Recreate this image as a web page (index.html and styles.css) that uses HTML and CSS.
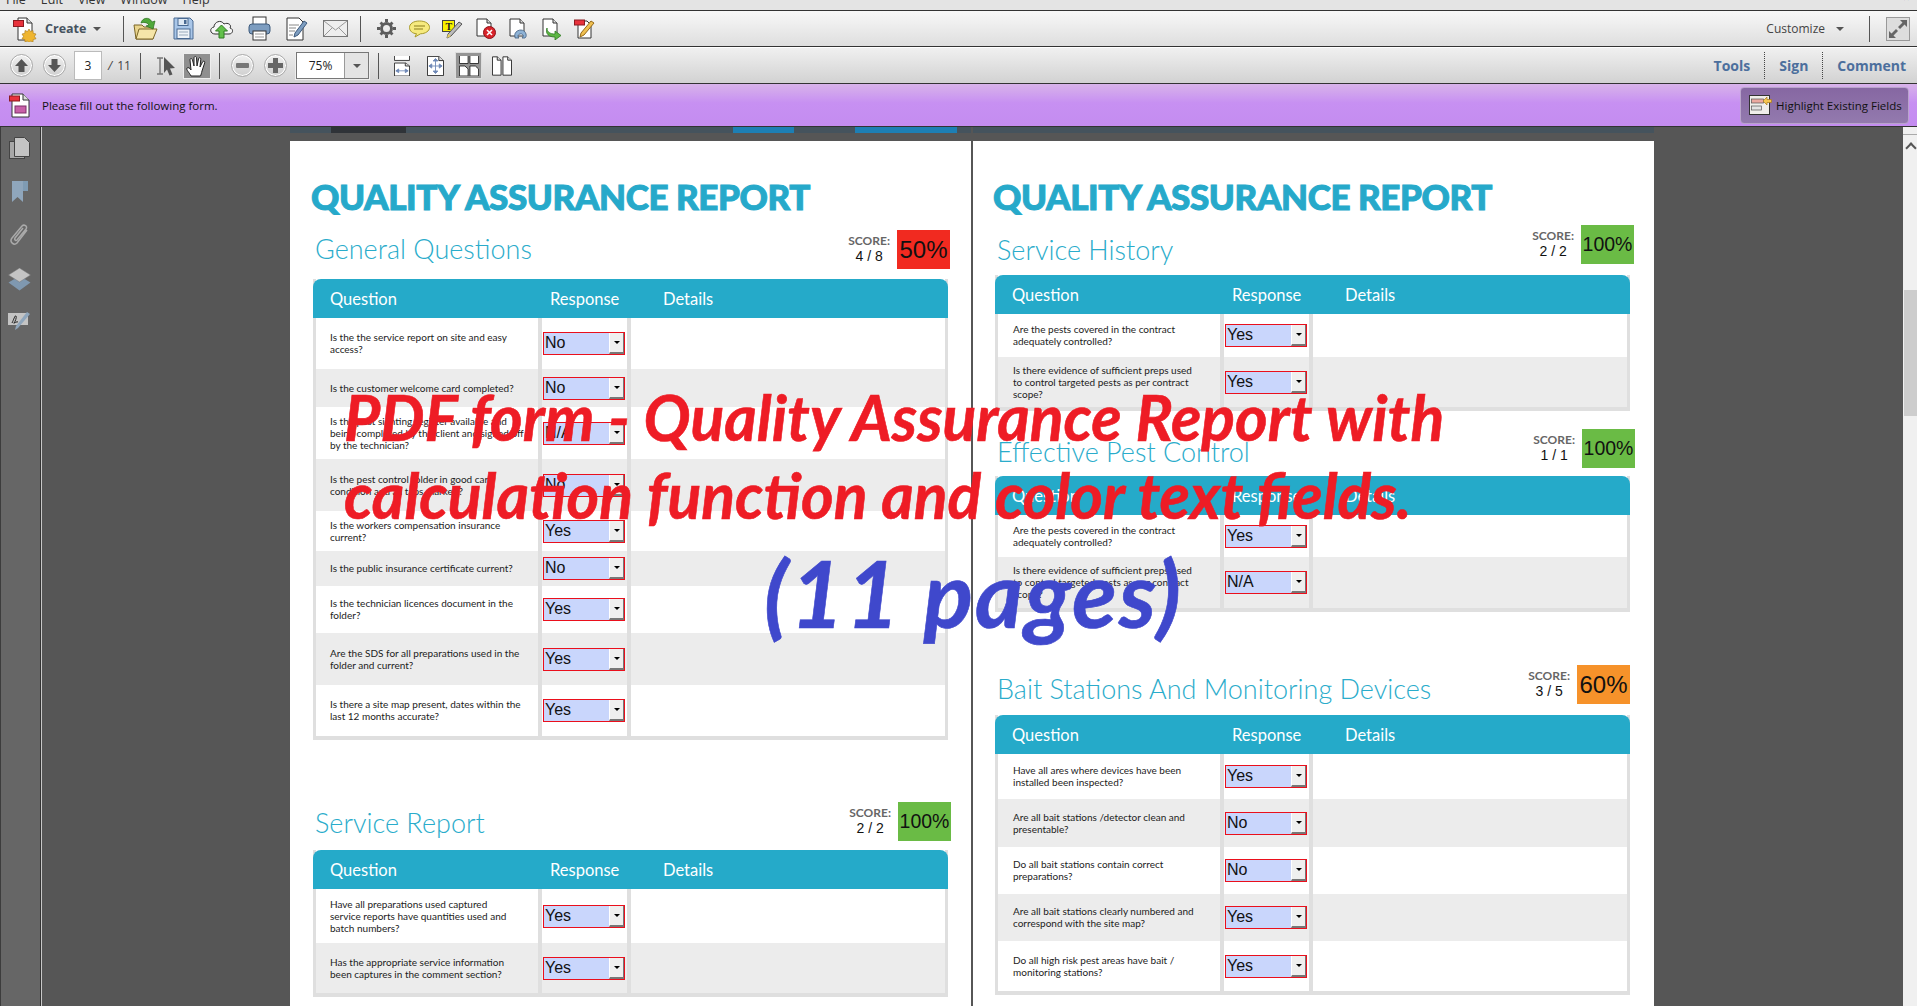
FILE: index.html
```html
<!DOCTYPE html>
<html>
<head>
<meta name="viewport" content="width=device-width, initial-scale=1">
<title>Quality Assurance Report</title>
<link rel="stylesheet" href="styles.css">
</head>
<body>
<div class="app">

  <div class="menubar">
    <span>File</span><span>Edit</span><span>View</span><span>Window</span><span>Help</span><span class="menu-close">×</span>
  </div>

  <!-- first toolbar -->
  <div class="toolbar tb1">
    <svg class="ico-create" width="24" height="26" viewBox="0 0 24 26"><path d="M5 2h9l5 5v17H5z" fill="#fff" stroke="#333"/><path d="M14 2v5h5" fill="#ddd" stroke="#333"/><rect x="0.5" y="4.500" width="10" height="6" fill="#e8323c" stroke="#8c1a20"/><path d="M16 13l1.500 2.500 2.500-1 .2 2.800 2.800.7-1.500 2.400 1.500 2.400-2.800.7-.2 2.500-2.500-1-1.500 2-1.500-2-2.500 1-.2-2.500-2.800-.7 1.500-2.400-1.500-2.400 2.800-.7.2-2.800 2.500 1z" fill="#efb52f" stroke="#a8781a" stroke-width=".6"/></svg>
    <span class="create-label">Create</span><span class="caret"></span>
    <span class="sep sep-a"></span>
    <span class="slot38"><svg width="25" height="25" viewBox="0 0 25 25"><path d="M1 9h8l2 2h9v12H3z" fill="#e9d48c" stroke="#7a6526"/><path d="M3 23l3-10h18l-4 10z" fill="#f5e5a8" stroke="#7a6526"/><path d="M8 7c1-5 8-7 11-1l3-1-2 8-7-3 3-1c-2-3-6-3-8-2z" fill="#4fa83a" stroke="#2a6e1e" stroke-width=".7"/></svg></span>
    <span class="slot38"><svg width="21" height="23" viewBox="0 0 21 23"><path d="M1 1h16l3 3v18H1z" fill="#a9c6e8" stroke="#4a6a92"/><rect x="5" y="1.500" width="10" height="7" fill="#dfe9f4" stroke="#4a6a92"/><rect x="11" y="3" width="2.500" height="4" fill="#4a6a92"/><rect x="4" y="12" width="13" height="9.500" fill="#eef3f8" stroke="#4a6a92"/><path d="M6 15h9M6 18h9" stroke="#9ab" stroke-width="1"/></svg></span>
    <span class="slot38"><svg width="25" height="21" viewBox="0 0 25 21"><path d="M6 16C1 16 0 10 5 9c0-5 7-8 10-3 4-2 8 1 6 4 4 1 3 6-1 6z" fill="#f6f6f6" stroke="#333"/><path d="M12.500 7l6 6h-3.500v7h-5v-7H6.500z" fill="#62c04a" stroke="#2f7a22"/></svg></span>
    <span class="slot38"><svg width="23" height="25" viewBox="0 0 23 25"><rect x="5" y="1" width="13" height="8" fill="#fff" stroke="#333"/><rect x="1" y="8" width="21" height="10" rx="3" fill="#7d9dc0" stroke="#3d5a7c"/><rect x="5" y="15" width="13" height="9" fill="#fff" stroke="#333"/><path d="M7 18h9M7 21h9" stroke="#999"/></svg></span>
    <span class="slot38"><svg width="22" height="24" viewBox="0 0 22 24"><path d="M1 1h12l4 4v18H1z" fill="#fff" stroke="#333"/><path d="M3 8h10M3 11h7M3 14h6M3 18h4" stroke="#888"/><path d="M18 4l3 2-9 12-4 2 1-4z" fill="#7d9dc0" stroke="#3d5a7c"/></svg></span>
    <span class="slot38"><svg width="25" height="17" viewBox="0 0 25 17"><rect x=".5" y=".5" width="24" height="16" fill="#eee" stroke="#777"/><path d="M1 1l11.500 9L24 1M1 16l8-8M24 16l-8-8" fill="none" stroke="#999"/></svg></span>
    <span class="sep sep-b"></span>
    <span class="slot33"><svg width="19" height="19" viewBox="0 0 19 19"><path d="M9.500 4.500a5 5 0 100 10 5 5 0 000-10z" fill="none" stroke="#5c5c5c" stroke-width="3"/><path d="M8 0h3v3H8zM8 16h3v3H8zM0 8h3v3H0zM16 8h3v3h-3zM2.500 4.500l2-2 2 2-2 2zM12.500 4.500l2-2 2 2-2 2zM2.500 14.500l2 2 2-2-2-2zM12.500 14.500l2 2 2-2-2-2z" fill="#5c5c5c"/></svg></span>
    <span class="slot33"><svg width="21" height="18" viewBox="0 0 21 18"><path d="M10.500 1C4 1 .5 4 .5 7.500s3 6 7 6.200L6 17l5.500-3.200c5-.2 9-2.800 9-6.300C20.500 4 17 1 10.500 1z" fill="#f6ea7e" stroke="#a89a2a"/><path d="M5 6h11M5 9h9" stroke="#8a7d1d"/></svg></span>
    <span class="slot33"><svg width="21" height="20" viewBox="0 0 21 20"><rect x=".5" y="1.500" width="12" height="11" fill="#f8f000" stroke="#444"/><text x="3.500" y="10.500" font-family="Liberation Serif" font-size="10" font-weight="700" fill="#222">T</text><path d="M17 3l3 2-11 12-4 2 1-4z" fill="#bbb" stroke="#555"/><path d="M5 19l1-4 3 2z" fill="#e8d060"/></svg></span>
    <span class="slot33"><svg width="20" height="21" viewBox="0 0 20 21"><path d="M1 1h10l4 4v13H1z" fill="#fff" stroke="#333"/><path d="M11 1v4h4" fill="#ddd" stroke="#333"/><circle cx="13.500" cy="14.500" r="6" fill="#d8232a" stroke="#8c1218"/><path d="M11 12l5 5M16 12l-5 5" stroke="#fff" stroke-width="1.600"/></svg></span>
    <span class="slot33"><svg width="19" height="21" viewBox="0 0 19 21"><path d="M1 1h10l4 4v13H1z" fill="#fff" stroke="#333"/><path d="M11 1v4h4" fill="#ddd" stroke="#333"/><path d="M6 19c-2-7 9-10 11-3 .5 2 0 3-1 4h-3c1-1 1.500-2 1-3-1-2-5-1-5 1 0 1 .5 1.500 1 2H6z" fill="#8fb3d6" stroke="#3d5a7c" stroke-width=".8"/></svg></span>
    <span class="slot33"><svg width="20" height="22" viewBox="0 0 20 22"><path d="M1 1h10l4 4v13H1z" fill="#fff" stroke="#333"/><path d="M11 1v4h4" fill="#ddd" stroke="#333"/><path d="M5 10c0 4 3 6 8 6v-3l6 4.500-6 4.500v-3c-6 0-10-3-8-9z" fill="#5db644" stroke="#2f7a22" stroke-width=".8"/></svg></span>
    <span class="slot33"><svg width="21" height="21" viewBox="0 0 21 21"><path d="M4 3h9l4 4v13H4z" fill="#fff" stroke="#333"/><rect x=".5" y="2" width="10" height="5" fill="#e8323c" stroke="#8c1a20"/><path d="M17 3l3 2-10 12-4 2 1-4z" fill="#f0c050" stroke="#94691a"/></svg></span>
    <span class="grow"></span>
    <span class="customize">Customize</span><span class="caret caret-c"></span>
    <span class="sep sep-c"></span>
    <span class="expand-btn"><svg width="22" height="22" viewBox="0 0 22 22"><path d="M13 2h7v7l-2.500-2.500L13 11l-2-2 4.500-4.500zM9 20H2v-7l2.500 2.500L9 11l2 2-4.500 4.500z" fill="#666"/></svg></span>
  </div>

  <!-- second toolbar -->
  <div class="toolbar tb2">
    <span class="round"><svg width="13" height="13" viewBox="0 0 13 13"><path d="M6.500 0l6.500 7H9.500v6h-6V7H0z" fill="#555"/></svg></span>
    <span class="round round-next"><svg width="13" height="13" viewBox="0 0 13 13"><path d="M6.500 13L0 6h3.500V0h6v6H13z" fill="#555"/></svg></span>
    <span class="page-box">3</span>
    <span class="page-total"><i>/</i>11</span>
    <span class="sep sep-d"></span>
    <svg class="ico-select" width="21" height="20" viewBox="0 0 21 20"><path d="M2 2h6M2 18h6M5 2v16" fill="none" stroke="#777" stroke-width="1.400"/><path d="M9 1l11 11-5 .5 2.500 6-3 1-2.500-6L9 17z" fill="#555"/></svg>
    <span class="hand-btn"><svg width="22" height="22" viewBox="0 0 22 22"><path d="M5 21c-2-4-5-6-4-8 1-1 3 0 4 2L4 5c0-2 2-2 2.500 0L8 11 8 3c0-2 2.500-2 2.500 0l.5 8 1.500-7c.5-2 2.500-1.500 2.300.2L14 12l2.500-5c1-1.500 2.800-.8 2.200.8L16 16c-.5 2-1 4-1.500 5z" fill="#fff" stroke="#222"/></svg></span>
    <span class="sep sep-e"></span>
    <span class="round"><svg width="13" height="13" viewBox="0 0 13 13"><rect y="4" width="13" height="5" rx="1" fill="#777"/></svg></span>
    <span class="round round-next"><svg width="15" height="15" viewBox="0 0 15 15"><path d="M5 0h5v5h5v5h-5v5H5v-5H0V5h5z" fill="#666"/></svg></span>
    <span class="zoom-box"><span class="zoom-val">75%</span><span class="zoom-drop"><span class="caret"></span></span></span>
    <span class="sep sep-f"></span>
    <svg class="ico-fitw" width="16" height="20" viewBox="0 0 17 27" preserveAspectRatio="none"><path d="M.5 0v6h16V0" fill="#fff" stroke="#222"/><path d="M.5 27V9.500h12l4 4V27z" fill="#fff" stroke="#222"/><path d="M12 9.500v4h4.500" fill="#ddd" stroke="#222"/><path d="M2 20h13M2 20l3-2.500v5zM15 20l-3-2.500v5z" fill="#6d87b6" stroke="#6d87b6"/></svg>
    <svg class="ico-fitp" width="17" height="20" viewBox="0 0 18 24" preserveAspectRatio="none"><path d="M.5.500h12l5 5v18H.5z" fill="#fff" stroke="#222"/><path d="M12.500.500v5h5" fill="#ddd" stroke="#222"/><path d="M9 4v16M3 12h12M9 3l-2.500 3h5zM9 21l-2.500-3h5zM2 12l3-2.500v5zM16 12l-3-2.500v5z" fill="#6d87b6" stroke="#6d87b6"/></svg>
    <span class="grid-btn"><svg width="20" height="20" viewBox="0 0 22 24" preserveAspectRatio="none"><path d="M.5 0v9h9.500V0M12 0v9h9.500V0" fill="#fff" stroke="#222"/><path d="M.5 24V12h6l3.500 3.500V24zM12 24V12h6l3.500 3.500V24z" fill="#fff" stroke="#222"/></svg></span>
    <svg class="ico-two" width="20" height="20" viewBox="0 0 21 24" preserveAspectRatio="none"><path d="M.5 1h5l4 4v18h-9zM11.500 1h5l4 4v18h-9z" fill="#fff" stroke="#222"/><path d="M5.500 1v4h4M16.500 1v4h4" fill="#ddd" stroke="#222"/></svg>
    <span class="grow"></span>
    <span class="pane-link">Tools</span>
    <span class="dots"></span>
    <span class="pane-link">Sign</span>
    <span class="dots"></span>
    <span class="pane-link">Comment</span>
  </div>

  <!-- form message bar -->
  <div class="formbar">
    <svg class="ico-form" width="22" height="26" viewBox="0 0 22 26"><path d="M3 2h11l6 6v17H3z" fill="#fff" stroke="#333"/><path d="M14 2v6h6" fill="#ddd" stroke="#333"/><rect x=".5" y="4" width="10" height="5" fill="#e8323c" stroke="#8c1a20"/><rect x="6" y="14" width="11" height="7" fill="#c860a8" stroke="#7c2f68"/></svg>
    <span class="formbar-msg">Please fill out the following form.</span>
    <span class="grow"></span>
    <span class="hl-btn">
      <svg width="23" height="20" viewBox="0 0 23 20"><rect x=".5" y=".5" width="20" height="19" fill="#f0eeea" stroke="#333"/><rect x="2.500" y="4" width="12" height="4" fill="#eba9a0" stroke="#555" stroke-width=".7"/><rect x="2.500" y="11" width="10" height="4" fill="#e4e4e4" stroke="#555" stroke-width=".7"/><path d="M14 6l4-4v2.500h4.500v3H18V10z" fill="#f5c550" stroke="#a87a1c" stroke-width=".7"/></svg>
      Highlight Existing Fields
    </span>
  </div>

  <div class="viewer">
    <div class="sidebar">
      <svg width="21" height="22" viewBox="0 0 21 22"><rect x=".5" y="4.500" width="15" height="17" fill="#a8a8a8" stroke="#444"/><path d="M5.500.500h10l5 5v14h-15z" fill="#c4c4c4" stroke="#444"/></svg>
      <svg width="18" height="22" viewBox="0 0 18 22"><path d="M1 1h11v21l-5.500-5L1 22z" fill="#8fa6bc"/><path d="M12 1h5v10h-5z" fill="#7f9bb3"/></svg>
      <svg width="21" height="24" viewBox="0 0 21 24"><path d="M18 7L8 20c-3 3-8-1-5-5L13 3c2-2 6 0 4 3L8 17c-1 1-3 0-2-2l8-10" fill="none" stroke="#aaa" stroke-width="1.500"/></svg>
      <svg width="23" height="23" viewBox="0 0 23 23"><path d="M11.500 8l11 6.500-11 8-11-8z" fill="#7f98b0"/><path d="M11.500 0l11 7-11 7-11-7z" fill="#c4c4c4" stroke="#777" stroke-width=".5"/></svg>
      <svg width="23" height="19" viewBox="0 0 23 19"><rect y="1" width="20" height="12" fill="#c4c4c4"/><path d="M4 11c2-4 3-8 4-7s-1 6-2 7 3-2 4-1" fill="none" stroke="#222"/><path d="M19 0l3 2-12 14-3 2 1-4z" fill="#8fa6bc"/></svg>
    </div>

    <div class="canvas">
      <!-- page 3 -->
      <div class="pagecol">
        <div class="prev-strip"></div>
        <div class="page page-l">
          <h1 class="report-title">QUALITY ASSURANCE REPORT</h1>

          <section class="sec s-general">
            <div class="head">
              <h2>General Questions</h2>
              <div class="score"><b>SCORE:</b><span>4 / 8</span></div>
              <div class="pct red">50%</div>
            </div>
            <div class="qa">
              <div class="qa-head"><span>Question</span><span>Response</span><span>Details</span></div>
              <div class="row h51"><div class="q"><span>Is the the service report on site and easy<br>access?</span></div><div class="r"><span class="fld">No<i></i></span></div><div class="d"></div></div>
              <div class="row h38"><div class="q"><span>Is the customer welcome card completed?</span></div><div class="r"><span class="fld">No<i></i></span></div><div class="d"></div></div>
              <div class="row h52"><div class="q"><span>Is the pest sighting register available and<br>being completed by the client and signed off<br>by the technician?</span></div><div class="r"><span class="fld">N/A<i></i></span></div><div class="d"></div></div>
              <div class="row h52"><div class="q"><span>Is the pest control folder in good care<br>condition and all tabs marked?</span></div><div class="r"><span class="fld">No<i></i></span></div><div class="d"></div></div>
              <div class="row h40"><div class="q"><span>Is the workers compensation insurance<br>current?</span></div><div class="r"><span class="fld">Yes<i></i></span></div><div class="d"></div></div>
              <div class="row h35"><div class="q"><span>Is the public insurance certificate current?</span></div><div class="r"><span class="fld">No<i></i></span></div><div class="d"></div></div>
              <div class="row h47"><div class="q"><span>Is the technician licences document in the<br>folder?</span></div><div class="r"><span class="fld">Yes<i></i></span></div><div class="d"></div></div>
              <div class="row h52"><div class="q"><span>Are the SDS for all preparations used in the<br>folder and current?</span></div><div class="r"><span class="fld">Yes<i></i></span></div><div class="d"></div></div>
              <div class="row h51"><div class="q"><span>Is there a site map present, dates within the<br>last 12 months accurate?</span></div><div class="r"><span class="fld">Yes<i></i></span></div><div class="d"></div></div>
            </div>
          </section>

          <section class="sec s-service">
            <div class="head">
              <h2>Service Report</h2>
              <div class="score"><b>SCORE:</b><span>2 / 2</span></div>
              <div class="pct green">100%</div>
            </div>
            <div class="qa">
              <div class="qa-head"><span>Question</span><span>Response</span><span>Details</span></div>
              <div class="row h54"><div class="q"><span>Have all preparations used captured<br>service reports have quantities used and<br>batch numbers?</span></div><div class="r"><span class="fld">Yes<i></i></span></div><div class="d"></div></div>
              <div class="row h50"><div class="q"><span>Has the appropriate service information<br>been captures in the comment section?</span></div><div class="r"><span class="fld">Yes<i></i></span></div><div class="d"></div></div>
            </div>
          </section>
        </div>
      </div>

      <!-- page 4 -->
      <div class="pagecol">
        <div class="prev-strip"></div>
        <div class="page page-r">
          <h1 class="report-title">QUALITY ASSURANCE REPORT</h1>

          <section class="sec s-history">
            <div class="head">
              <h2>Service History</h2>
              <div class="score"><b>SCORE:</b><span>2 / 2</span></div>
              <div class="pct green">100%</div>
            </div>
            <div class="qa">
              <div class="qa-head"><span>Question</span><span>Response</span><span>Details</span></div>
              <div class="row h43"><div class="q"><span>Are the pests covered in the contract<br>adequately controlled?</span></div><div class="r"><span class="fld">Yes<i></i></span></div><div class="d"></div></div>
              <div class="row h50"><div class="q"><span>Is there evidence of sufficient preps used<br>to control targeted pests as per contract<br>scope?</span></div><div class="r"><span class="fld">Yes<i></i></span></div><div class="d"></div></div>
            </div>
          </section>

          <section class="sec s-effective">
            <div class="head">
              <h2>Effective Pest Control</h2>
              <div class="score"><b>SCORE:</b><span>1 / 1</span></div>
              <div class="pct green">100%</div>
            </div>
            <div class="qa">
              <div class="qa-head"><span>Question</span><span>Response</span><span>Details</span></div>
              <div class="row h42"><div class="q"><span>Are the pests covered in the contract<br>adequately controlled?</span></div><div class="r"><span class="fld">Yes<i></i></span></div><div class="d"></div></div>
              <div class="row h51"><div class="q"><span>Is there evidence of sufficient preps used<br>to control targeted pests as per contract<br>scope?</span></div><div class="r"><span class="fld">N/A<i></i></span></div><div class="d"></div></div>
            </div>
          </section>

          <section class="sec s-bait">
            <div class="head">
              <h2>Bait Stations And Monitoring Devices</h2>
              <div class="score"><b>SCORE:</b><span>3 / 5</span></div>
              <div class="pct orange">60%</div>
            </div>
            <div class="qa">
              <div class="qa-head"><span>Question</span><span>Response</span><span>Details</span></div>
              <div class="row h45"><div class="q"><span>Have all ares where devices have been<br>installed been inspected?</span></div><div class="r"><span class="fld">Yes<i></i></span></div><div class="d"></div></div>
              <div class="row h48"><div class="q"><span>Are all bait stations /detector clean and<br>presentable?</span></div><div class="r"><span class="fld">No<i></i></span></div><div class="d"></div></div>
              <div class="row h47"><div class="q"><span>Do all bait stations contain correct<br>preparations?</span></div><div class="r"><span class="fld">No<i></i></span></div><div class="d"></div></div>
              <div class="row h47"><div class="q"><span>Are all bait stations clearly numbered and<br>correspond with the site map?</span></div><div class="r"><span class="fld">Yes<i></i></span></div><div class="d"></div></div>
              <div class="row h50"><div class="q"><span>Do all high risk pest areas have bait /<br>monitoring stations?</span></div><div class="r"><span class="fld">Yes<i></i></span></div><div class="d"></div></div>
            </div>
          </section>
        </div>
      </div>
    </div>

    <div class="scrollbar"><span class="sb-top"></span><span class="sb-up"></span><span class="sb-thumb"></span></div>
  </div>

  <!-- caption pasted over the screenshot -->
  <div class="caption">
    <span class="cap-line">PDF form - Quality Assurance Report with</span>
    <span class="cap-line">calculation function and color text fields.</span>
    <span class="cap-pages">(11 pages)</span>
  </div>
</div>
</body>
</html>
```
FILE: styles.css
```css
* {
  box-sizing: border-box;
}

html, body {
  margin: 0;
  height: 100%;
  overflow: hidden;
}

body {
  font-family: "Open Sans", "Liberation Sans", sans-serif;
  color: #222;
}

.app {
  position: relative;
  width: 1917px;
  height: 1006px;
  display: flex;
  flex-direction: column;
  overflow: hidden;
}

.grow {
  flex: 1;
}

/* Menu bar, cut off by the top of the window */
.menubar {
  height: 10px;
  flex: none;
  background: #e4e4e4;
  overflow: hidden;
  display: flex;
  gap: 15px;
  padding: 0 7px 0 6px;
  font-size: 12.500px;
  line-height: 12px;
  color: #333;
}

.menubar span {
  margin-top: -6px;
}

.menubar .menu-close {
  margin-left: auto;
  margin-top: -8px;
  font-weight: 700;
}

/* Toolbars */
.toolbar {
  height: 37px;
  flex: none;
  display: flex;
  align-items: center;
}

.tb1 {
  background: linear-gradient(#f8f8f8, #dedede);
  border-top: 1px solid #333;
  border-bottom: 1px solid #333;
  padding-left: 13px;
}

.tb2 {
  background: linear-gradient(#f0f0f0, #d2d2d2);
  border-top: 1px solid #fff;
  border-bottom: 1px solid #333;
  padding-left: 10px;
}

.slot38, .slot33 {
  display: flex;
  justify-content: center;
  flex: none;
}

.slot38 {
  width: 38px;
}

.slot33 {
  width: 33px;
}

.ico-create {
  flex: none;
}

.create-label {
  margin-left: 8px;
  font-size: 12.500px;
  font-weight: 700;
  color: #46535f;
}

.caret {
  display: inline-block;
  width: 0;
  height: 0;
  border-left: 4px solid transparent;
  border-right: 4px solid transparent;
  border-top: 4px solid #555;
  margin-left: 7px;
}

.sep {
  width: 1px;
  height: 26px;
  background: #555;
  flex: none;
}

.sep-a {
  margin: 0 2px 0 22px;
}

.sep-b {
  margin: 0 9px 0 6px;
}

.sep-c {
  margin: 0 16px 0 25px;
}

.sep-d {
  margin: 0 14px 0 9px;
}

.sep-e {
  margin: 0 11px 0 8px;
}

.sep-f {
  margin: 0 15px 0 9px;
}

.customize {
  font-size: 12px;
  color: #444;
}

.caret-c {
  margin-left: 11px;
}

.expand-btn {
  width: 24px;
  height: 24px;
  margin-right: 7px;
  border: 1px solid #999;
  background: #ddd;
  display: flex;
  align-items: center;
  justify-content: center;
}

.round {
  width: 23px;
  height: 23px;
  flex: none;
  border-radius: 50%;
  border: 1px solid #aaa;
  box-shadow: inset 0 0 0 1px #fff;
  background: linear-gradient(#f0f0f0, #cfcfcf);
  display: flex;
  align-items: center;
  justify-content: center;
}

.round-next {
  margin-left: 10px;
}

.page-box {
  width: 26px;
  height: 27px;
  margin-left: 9px;
  background: #fff;
  border: 1px solid #fff;
  outline: 1px solid #bbb;
  font-size: 12px;
  line-height: 25px;
  text-align: center;
}

.page-total {
  width: 30px;
  padding-left: 7px;
  font-size: 12px;
  color: #444;
  white-space: nowrap;
}

.page-total i {
  margin-right: 5px;
}

.ico-select {
  flex: none;
}

.hand-btn {
  width: 28px;
  height: 26px;
  margin-left: 7px;
  flex: none;
  background: #8f8f8f;
  border: 1px solid #eee;
  display: flex;
  align-items: center;
  justify-content: center;
}

.zoom-box {
  width: 73px;
  height: 27px;
  margin-left: 9px;
  flex: none;
  display: flex;
  background: #fff;
  border: 1px solid #777;
  outline: 1px solid #eee;
}

.zoom-val {
  width: 47px;
  font-size: 12px;
  line-height: 25px;
  text-align: center;
}

.zoom-drop {
  flex: 1;
  background: #e4e4e4;
  border-left: 1px solid #999;
  display: flex;
  align-items: center;
  justify-content: center;
}

.zoom-drop .caret {
  margin: 0;
}

.ico-fitw, .ico-fitp, .ico-two {
  flex: none;
}

.ico-fitp {
  margin-left: 17px;
}

.grid-btn {
  width: 27px;
  height: 27px;
  margin-left: 11px;
  flex: none;
  background: #949494;
  border: 1px solid #ddd;
  display: flex;
  align-items: center;
  justify-content: center;
}

.ico-two {
  margin-left: 10px;
}

.pane-link {
  font-size: 14px;
  font-weight: 700;
  color: #4c6f9d;
}

.dots {
  height: 27px;
  margin: 0 14px;
  border-left: 1px dotted #444;
}

.tb2 .pane-link:last-child {
  margin-right: 11px;
}

/* Purple message bar */
.formbar {
  height: 43px;
  flex: none;
  display: flex;
  align-items: center;
  padding: 0 8px 0 9px;
  background: linear-gradient(#d8b3ea, #c790f2 45%, #c48cf0);
  border-bottom: 1px solid #333;
}

.ico-form {
  flex: none;
}

.formbar-msg {
  margin-left: 11px;
  font-size: 11.500px;
  color: #111;
}

.hl-btn {
  width: 169px;
  height: 37px;
  display: flex;
  align-items: center;
  gap: 4px;
  padding-left: 8px;
  font-size: 11.500px;
  white-space: nowrap;
  color: #111;
  border: 1px solid #b9a4cc;
  border-radius: 4px;
  background: linear-gradient(#8667a2, #937aae);
}

/* Document area */
.viewer {
  flex: 1;
  min-height: 0;
  display: flex;
  background: #565656;
}

.sidebar {
  width: 42px;
  flex: none;
  display: flex;
  flex-direction: column;
  align-items: center;
  gap: 21px;
  padding: 10px 3px 0 0;
  background: #666;
  border-left: 1px solid #3c3c3c;
  border-right: 1px solid #c8c8c8;
  box-shadow: inset -1px 0 0 #333;
}

.canvas {
  flex: 1;
  min-width: 0;
  display: flex;
  gap: 2px;
  padding-left: 248px;
  overflow: hidden;
}

.pagecol {
  width: 681px;
  flex: none;
}

.prev-strip {
  height: 6px;
  margin-bottom: 8px;
  background: linear-gradient(90deg, #45535d 0 6%, #2f3338 6% 17%, #45535d 17% 65%, #1d7fb4 65% 74%, #45535d 74% 83%, #1d7fb4 83% 98%, #45535d 98% 100%);
}

.pagecol + .pagecol .prev-strip {
  background: #45535d;
}

.page {
  height: 900px;
  background: #fff;
  padding-top: 42px;
}

.page-l {
  padding-left: 23px;
  padding-right: 23px;
}

.page-r {
  padding-left: 22px;
  padding-right: 24px;
}

.report-title {
  margin: 0 0 0 -2px;
  height: 27px;
  font-family: Lato, sans-serif;
  font-weight: 900;
  font-size: 35px;
  line-height: 27px;
  letter-spacing: -.4px;
  white-space: nowrap;
  color: #26a9ca;
  -webkit-text-stroke: 1px #26a9ca;
}

/* Sections */
.head {
  display: flex;
  align-items: flex-start;
  height: 49px;
}

.head h2 {
  margin: 0 auto 0 2px;
  font-family: Lato, sans-serif;
  font-weight: 300;
  font-size: 27px;
  line-height: 34px;
  color: #2aaccb;
  white-space: nowrap;
}

.score {
  margin-right: 7px;
  padding-top: 4px;
  display: flex;
  flex-direction: column;
  align-items: center;
  font-family: "Liberation Sans", sans-serif;
  font-size: 14px;
  line-height: 16px;
  color: #111;
}

.score b {
  margin-bottom: 1px;
  font-family: Lato, sans-serif;
  font-size: 12px;
  line-height: 13px;
  color: #666;
}

.pct {
  width: 53px;
  height: 39px;
  font-family: "Liberation Sans", sans-serif;
  font-size: 24px;
  line-height: 39px;
  text-align: center;
  color: #111;
}

.red {
  background: #f12a20;
}

.green {
  background: #6abb45;
  font-size: 19.500px;
}

.orange {
  background: #f6922a;
}

.s-general {
  margin-top: 20px;
}

.s-general .head {
  margin-right: -2px;
}

.s-general h2 {
  margin-top: 2px;
}

.s-service {
  margin-top: 62px;
}

.s-service .head {
  height: 48px;
  margin-right: -3px;
}

.s-service h2 {
  margin-top: 4px;
}

.s-history {
  margin-top: 15px;
}

.s-history .head {
  height: 50px;
  margin-right: -4px;
}

.s-history h2 {
  margin-top: 8px;
}

.s-effective {
  margin-top: 18px;
}

.s-effective .head {
  height: 47px;
  margin-right: -5px;
}

.s-effective h2 {
  margin-top: 6px;
}

.s-bait {
  margin-top: 53px;
}

.s-bait .head {
  height: 50px;
}

.s-bait h2 {
  margin-top: 7px;
}

/* Question tables */
.qa {
  border: solid #dfdfdf;
  border-width: 0 3px 4px;
}

.qa-head {
  height: 39px;
  margin: 0 -3px;
  display: grid;
  grid-template-columns: 220px 113px 1fr;
  align-items: center;
  padding: 1px 0 0 17px;
  font-family: Lato, sans-serif;
  font-size: 16.500px;
  color: #fff;
  background: #25aac9;
  border-radius: 8px 8px 0 0;
}

.row {
  display: grid;
  grid-template-columns: 226px 89px 1fr;
  background: #fff;
}

.row:nth-child(odd) {
  background: #ececec;
}

.q {
  display: flex;
  align-items: center;
  padding: 0 0 1px 14px;
  border-right: 4px solid #dfdfdf;
  font-family: Lato, sans-serif;
  font-size: 10px;
  line-height: 12px;
  color: #222;
  white-space: nowrap;
}

.page-r .q {
  padding-left: 15px;
}

.r {
  display: flex;
  align-items: center;
  padding-left: 1px;
  border-right: 4px solid #dfdfdf;
}

.fld {
  position: relative;
  width: 82px;
  height: 23px;
  padding-left: 1px;
  border: 1px solid #ea0f1c;
  background: #c9d6fc;
  font-family: "Liberation Sans", sans-serif;
  font-size: 16px;
  line-height: 20px;
  color: #111;
}

/* dropdown arrow of the form field */
.fld i {
  position: absolute;
  top: 0;
  right: 0;
  width: 15px;
  height: 21px;
  background: #efefef;
  border-right: 1px solid #777;
  border-bottom: 2px solid #777;
  border-left: 1px solid #fff;
}

.fld i::after {
  content: "";
  position: absolute;
  left: 4px;
  top: 8px;
  border-left: 3px solid transparent;
  border-right: 3px solid transparent;
  border-top: 3px solid #000;
}

.h35 { height: 35px; }
.h38 { height: 38px; }
.h40 { height: 40px; }
.h42 { height: 42px; }
.h43 { height: 43px; }
.h45 { height: 45px; }
.h47 { height: 47px; }
.h48 { height: 48px; }
.h50 { height: 50px; }
.h51 { height: 51px; }
.h52 { height: 52px; }
.h54 { height: 54px; }

/* Scrollbar */
.scrollbar {
  width: 14px;
  flex: none;
  display: flex;
  flex-direction: column;
  background: #f0f0f0;
}

.sb-top {
  height: 8px;
  border-bottom: 1px solid #aaa;
}

.sb-up {
  height: 155px;
  position: relative;
}

.sb-up::after {
  content: "";
  position: absolute;
  left: 4px;
  top: 9px;
  width: 6px;
  height: 6px;
  border-top: 2px solid #555;
  border-left: 2px solid #555;
  transform: rotate(45deg);
}

.sb-thumb {
  height: 126px;
  margin-left: 1px;
  background: #cdcdcd;
}

/* Caption over the page */
.caption {
  position: absolute;
  left: 344px;
  top: 378px;
  font-family: Lato, sans-serif;
  font-style: italic;
  font-weight: 700;
  white-space: nowrap;
  pointer-events: none;
}

.cap-line {
  display: block;
  font-size: 62.500px;
  line-height: 78px;
  color: #ee1c25;
  -webkit-text-stroke: .6px #ee1c25;
}

.cap-pages {
  display: block;
  margin: 11px 0 0 420px;
  font-size: 92px;
  line-height: 96px;
  letter-spacing: 2px;
  color: #3f48cc;
  -webkit-text-stroke: .6px #3f48cc;
}
```
